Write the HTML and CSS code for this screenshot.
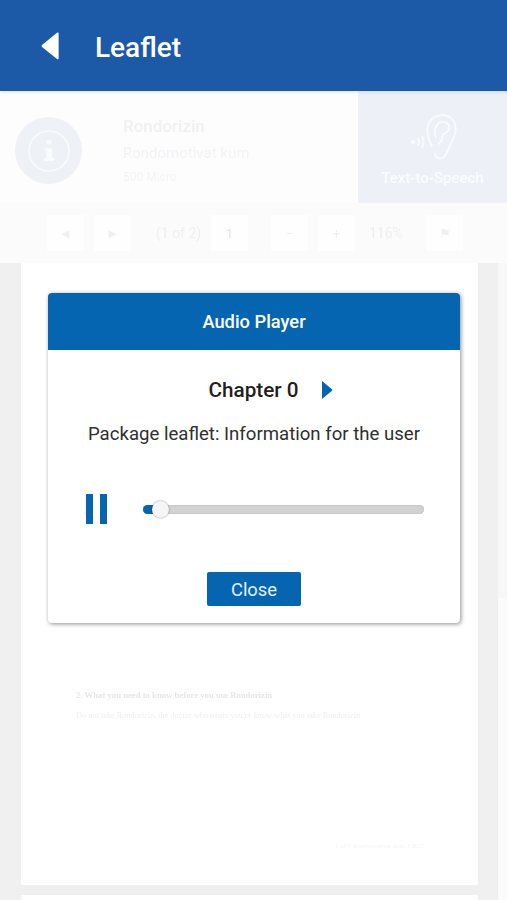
FILE: index.html
```html
<!DOCTYPE html>
<html>
<head>
    <title>Leaflet</title>
    <link rel="stylesheet" href="styles.css">
</head>
<body>

    <!-- Top bar -->
    <div class="topbar">
        <svg class="back-icon" width="20" height="30" viewBox="0 0 20 30">
            <path d="M18 1.5 L18.6 2 V27.5 L18 28.5 L17 28 L2 16 Q1 15 2 14 L17 1.8 Z" fill="#fff"/>
        </svg>
        <span class="topbar-title">Leaflet</span>
    </div>

    <!-- Drug info, washed out behind the dialog -->
    <div class="info-row">
        <div class="info-main">
            <div class="info-circle">
                <svg width="44" height="44" viewBox="0 0 44 44">
                    <circle cx="22" cy="22" r="20" fill="none" stroke="#fafbfd" stroke-width="1.6"/>
                    <circle cx="22" cy="13" r="2.6" fill="#fafbfd"/>
                    <path d="M18 19 H25 V29 H27 V32 H17 V29 H19.5 V22 H18 Z" fill="#fafbfd"/>
                </svg>
            </div>
            <div class="info-text">
                <div class="info-name">Rondorizin</div>
                <div class="info-sub">Rondomotivat kum</div>
                <div class="info-small">500 Micro</div>
            </div>
        </div>
        <div class="tts-panel">
            <svg width="50" height="48" viewBox="0 0 50 48" fill="none" stroke="#fbfcfe" stroke-width="1.6">
                <path d="M24 33 C20 26 18 20 20 12 C23 2 37 -1 44 6 C50 12 47 22 44 28 C41 33 40 40 36 44 C32 47 27 45 27 40"/>
                <path d="M28 25 C25 18 28 9 35 9 C41 9 43 14 40 18 C37 21 34 20 34 25 C34 28 32 30 30 31"/>
                <path d="M14 23 Q17 29 14 35 M10 25 Q12 29 10 33"/>
                <circle cx="5" cy="29" r="1.2" fill="#fbfcfe"/>
            </svg>
            <div class="tts-label">Text-to-Speech</div>
        </div>
    </div>

    <!-- Pdf toolbar -->
    <div class="toolbar">
        <div class="tool-btn first">&#9668;</div>
        <div class="tool-btn">&#9658;</div>
        <div class="tool-text count">(1 of 2)</div>
        <div class="tool-btn page-input">1</div>
        <div class="tool-btn zoom-out">&#8722;</div>
        <div class="tool-btn">+</div>
        <div class="tool-text scale">116%</div>
        <div class="tool-btn">&#9873;</div>
    </div>

    <!-- Pdf pages -->
    <div class="viewer">
        <div class="page">
            <div class="page-heading">2. What you need to know before you use Rondorizin</div>
            <div class="page-line">Do not take Rondorizin, the doctor who treats you or know what you take Rondorizin</div>
            <div class="page-foot">CxPP-Rondomotivat-kum 1/2017</div>
        </div>
        <div class="page next-page"></div>
        <div class="scroll-strip"></div>
    </div>

    <!-- Audio dialog -->
    <div class="dialog">
        <div class="dialog-head">Audio Player</div>
        <div class="dialog-body">
            <div class="chapter-row">
                <span class="chapter-name">Chapter 0</span>
                <svg class="chapter-next" width="12" height="20" viewBox="0 0 12 20">
                    <path d="M1 1 L11 9.2 Q12 10 11 10.8 L1 19 Z" fill="#0565b1"/>
                </svg>
            </div>
            <div class="chapter-title">Package leaflet: Information for the user</div>
            <div class="player-row">
                <div class="pause-btn"><span></span><span></span></div>
                <div class="slider">
                    <div class="slider-fill"></div>
                    <div class="slider-knob"></div>
                </div>
            </div>
            <div class="close-btn">Close</div>
        </div>
    </div>

</body>
</html>
```

FILE: styles.css
```css
html, body {
    height: 100%;
}

body {
    margin: 0;
    width: 507px;
    height: 900px;
    overflow: hidden;
    position: relative;
    font-family: Roboto, "Liberation Sans", sans-serif;
    background: #fdfdfe;
    color: #222;
}

.topbar {
    height: 91px;
    background: #1c5aa8;
    display: flex;
    align-items: center;
    color: #fff;
    padding-left: 40px;
    box-shadow: 0 1px 3px rgba(0, 0, 0, 0.12);
    position: relative;
}

.back-icon {
    margin-right: 35px;
}

.topbar-title {
    font-size: 28px;
    font-weight: 500;
    margin-top: 3px;
}

.info-row {
    height: 112px;
    display: flex;
    background: #fdfdfe;
}

.info-main {
    flex: 1;
    display: flex;
    align-items: center;
    padding-left: 15px;
}

.info-circle {
    width: 67px;
    height: 67px;
    border-radius: 50%;
    background: #eef1f6;
    display: flex;
    align-items: center;
    justify-content: center;
    margin-right: 41px;
    flex-shrink: 0;
    margin-top: 7px;
}

.info-text {
    filter: blur(0.7px);
    margin-top: 6px;
}

.info-name {
    font-size: 17px;
    font-weight: 500;
    color: #eff0f2;
    margin-bottom: 8px;
}

.info-sub {
    font-size: 15px;
    color: #f1f2f4;
    margin-bottom: 8px;
}

.info-small {
    font-size: 12px;
    color: #f3f4f4;
}

.tts-panel {
    width: 149px;
    background: #edf1f7;
    display: flex;
    flex-direction: column;
    align-items: center;
    padding-top: 22px;
    box-sizing: border-box;
}

.tts-panel svg {
    filter: blur(0.4px);
}

.tts-label {
    font-size: 15px;
    font-weight: 500;
    color: #fbfcfe;
    margin-top: 8px;
    filter: blur(0.6px);
}

.toolbar {
    height: 60px;
    box-sizing: border-box;
    background: #fbfbfb;
    display: flex;
    align-items: center;
    padding-left: 47px;
    color: #efefef;
    font-size: 13px;
}

.tool-btn {
    width: 37px;
    height: 36px;
    margin-right: 10px;
    background: #fefefe;
    display: flex;
    align-items: center;
    justify-content: center;
    filter: blur(0.4px);
    flex-shrink: 0;
}

.tool-text {
    filter: blur(0.7px);
    font-size: 14px;
}

.count {
    width: 55px;
    margin-left: 15px;
    white-space: nowrap;
}

.page-input {
    margin-right: 23px;
    color: #e4e4e4;
}

.zoom-out {
    margin-right: 10px;
}

.scale {
    width: 45px;
    margin-left: 4px;
    margin-right: 12px;
}

.viewer {
    height: 637px;
    background: #f0f0f0;
    position: relative;
    overflow: hidden;
    padding-left: 21px;
}

.page {
    width: 457px;
    height: 622px;
    background: #fff;
    position: relative;
    box-sizing: border-box;
    padding: 427px 0 0 55px;
    font-family: "Liberation Serif", serif;
    filter: blur(0.3px);
}

.page-heading {
    font-size: 8.7px;
    font-weight: bold;
    color: #e6e6e6;
    margin-bottom: 11px;
    filter: blur(0.6px);
}

.page-line {
    font-size: 8.3px;
    color: #efefef;
    filter: blur(0.6px);
}

.page-foot {
    font-size: 6.6px;
    color: #f3f3f3;
    margin: 122px 0 0 260px;
    filter: blur(0.5px);
}

.next-page {
    margin-top: 10px;
    padding: 0;
}

.scroll-strip {
    position: absolute;
    top: 0;
    right: 0;
    width: 9px;
    height: 637px;
    background: linear-gradient(#f7f7f7 335px, #fbfbfb 335px);
}

.dialog {
    position: absolute;
    left: 48px;
    top: 293px;
    width: 412px;
    height: 330px;
    background: #fff;
    border-radius: 4px;
    box-shadow: 1px 1px 4px rgba(0, 0, 0, 0.45);
    overflow: hidden;
}

.dialog-head {
    height: 57px;
    background: #0565b1;
    color: #fff;
    font-size: 18.3px;
    font-weight: 500;
    display: flex;
    align-items: center;
    justify-content: center;
}

.dialog-body {
    display: flex;
    flex-direction: column;
    align-items: center;
}

.chapter-row {
    display: flex;
    align-items: center;
    margin-top: 28px;
    height: 24px;
    padding-left: 34px;
}

.chapter-name {
    font-size: 20.7px;
    font-weight: 500;
    color: #1f1f1f;
}

.chapter-next {
    margin-left: 23px;
}

.chapter-title {
    font-size: 18.6px;
    color: #2f2f2f;
    margin-top: 21px;
}

.player-row {
    display: flex;
    align-items: center;
    align-self: stretch;
    padding-left: 38px;
    margin-top: 49px;
}

.pause-btn {
    display: flex;
    gap: 7px;
    margin-right: 36px;
}

.pause-btn span {
    width: 7px;
    height: 30px;
    background: #0565b1;
}

.slider {
    width: 281px;
    height: 9px;
    border-radius: 5px;
    background: #d2d2d2;
    box-shadow: inset 0 0 0 1px #c8c8c8;
    position: relative;
}

.slider-fill {
    width: 14px;
    height: 9px;
    border-radius: 5px 0 0 5px;
    background: #0565b1;
}

.slider-knob {
    position: absolute;
    left: 9px;
    top: -4px;
    width: 17px;
    height: 17px;
    border-radius: 50%;
    background: #f5f5f5;
    box-shadow: 0 0 2px rgba(0, 0, 0, 0.45);
}

.close-btn {
    width: 94px;
    height: 34px;
    margin-top: 48px;
    background: #0565b1;
    border-radius: 2px;
    color: #e8f0f7;
    font-size: 18.4px;
    display: flex;
    align-items: center;
    justify-content: center;
}
```
